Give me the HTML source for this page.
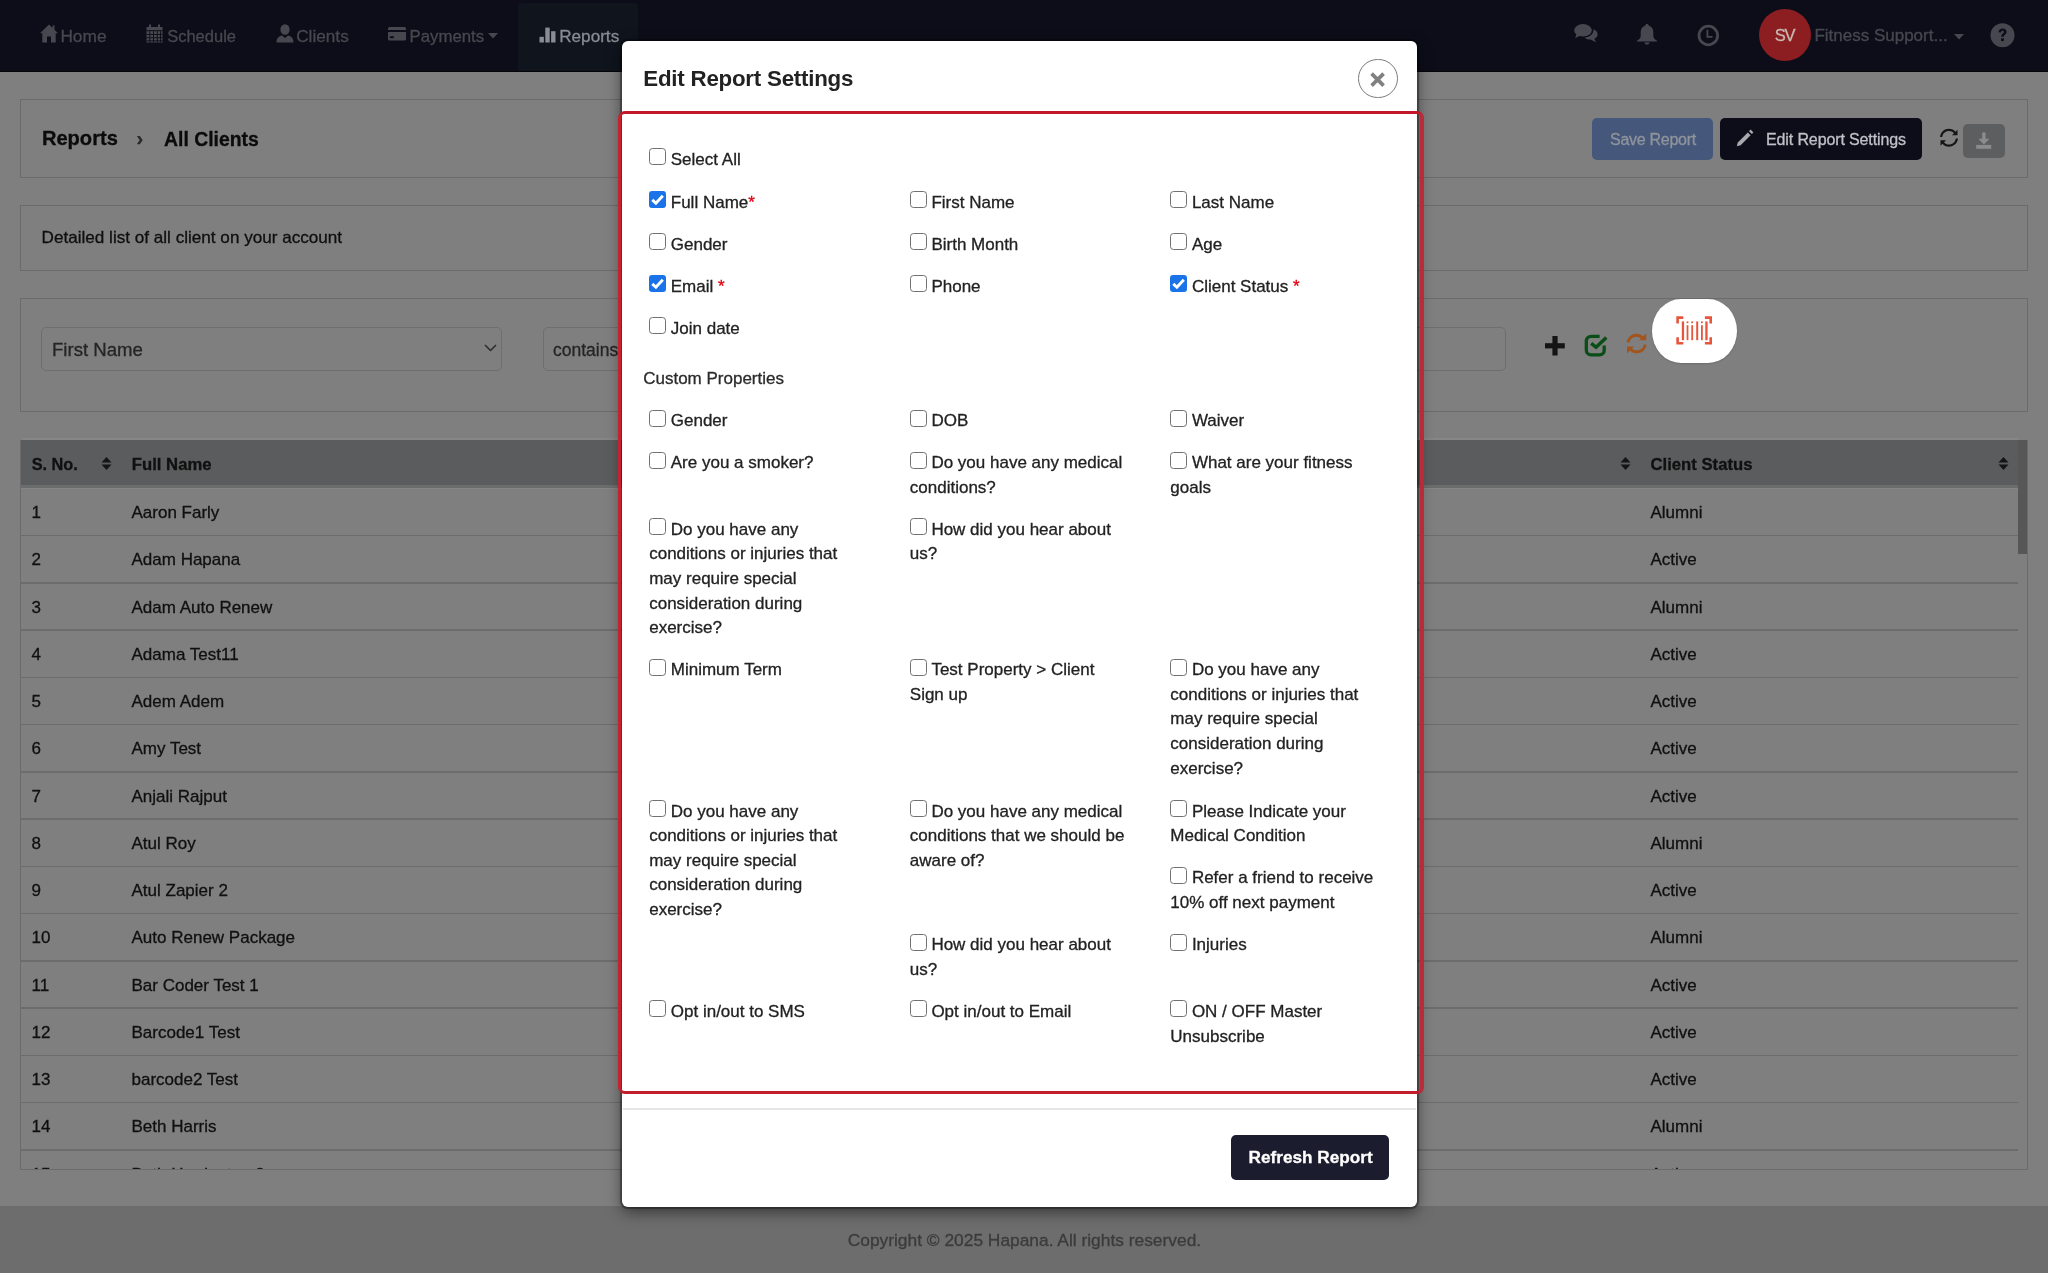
<!DOCTYPE html>
<html>
<head>
<meta charset="utf-8">
<title>Edit Report Settings</title>
<style>
*{box-sizing:border-box;margin:0;padding:0}
html,body{width:2048px;height:1273px;overflow:hidden}
body{position:relative;background:#7f7f7f;font-family:"Liberation Sans",sans-serif;color:#111;font-size:17px}
.abs{position:absolute}
.t{white-space:nowrap;-webkit-text-stroke:0.3px currentColor}
svg{display:block}
</style>
</head>
<body>
<div id="root" style="position:absolute;left:0;top:0;width:2048px;height:1273px;will-change:transform">
<div class="abs" style="left:0;top:0;width:2048px;height:71px;background:#0c0d18"></div>
<div class="abs" style="left:518px;top:3px;width:120px;height:68px;background:#0f141d;border-radius:4px 4px 0 0"></div>
<div class="abs" style="left:0;top:71px;width:2048px;height:1px;background:#050509"></div>
<svg class="abs" style="left:40px;top:24px" width="18" height="19" viewBox="0 0 18 19"><path d="M9 0.5 L0 9.2 L2.3 9.2 L2.3 18.5 L7 18.5 L7 12.5 L11 12.5 L11 18.5 L15.7 18.5 L15.7 9.2 L18 9.2 L14.5 5.8 L14.5 1.5 L12.5 1.5 L12.5 3.9 Z" fill="#47484f"/></svg>
<div class="abs t " style="left:60.4px;top:26.66px;font-size:17.3px;line-height:19.89px;font-weight:400;color:#47484f;">Home</div>
<svg class="abs" style="left:146px;top:24px" width="17" height="19" viewBox="0 0 17 19"><rect x="0.5" y="3" width="16" height="15.5" fill="#47484f"/><rect x="3" y="0.5" width="2" height="4" fill="#47484f"/><rect x="12" y="0.5" width="2" height="4" fill="#47484f"/>
<g fill="#0c0d18"><rect x="0.5" y="6.2" width="16" height="1"/>
<rect x="3.4" y="7.2" width="0.9" height="11"/><rect x="7.1" y="7.2" width="0.9" height="11"/><rect x="10.8" y="7.2" width="0.9" height="11"/><rect x="14.1" y="7.2" width="0.9" height="11"/>
<rect x="0.5" y="10" width="16" height="0.9"/><rect x="0.5" y="13.3" width="16" height="0.9"/><rect x="0.5" y="16.4" width="16" height="0.9"/></g></svg>
<div class="abs t " style="left:167.2px;top:27.40px;font-size:16.5px;line-height:18.97px;font-weight:400;color:#47484f;">Schedule</div>
<svg class="abs" style="left:276px;top:24px" width="18" height="19" viewBox="0 0 18 19"><ellipse cx="9" cy="5.5" rx="4.6" ry="5.3" fill="#47484f"/><path d="M0.5 18.5 C0.5 14 3 12.2 6 11.6 L9 14 L12 11.6 C15 12.2 17.5 14 17.5 18.5 Z" fill="#47484f"/></svg>
<div class="abs t " style="left:296.2px;top:26.75px;font-size:17.2px;line-height:19.78px;font-weight:400;color:#47484f;">Clients</div>
<svg class="abs" style="left:388px;top:27px" width="18" height="14" viewBox="0 0 18 14"><rect x="0" y="0" width="18" height="13.5" rx="1.5" fill="#47484f"/><rect x="0" y="3" width="18" height="2" fill="#0c0d18"/><rect x="1.8" y="9.2" width="4" height="2" fill="#0c0d18"/></svg>
<div class="abs t " style="left:409.5px;top:27.12px;font-size:16.8px;line-height:19.32px;font-weight:400;color:#47484f;">Payments</div>
<svg class="abs" style="left:488px;top:33px" width="10" height="6" viewBox="0 0 10 6"><path d="M0 0 L10 0 L5 5.5 Z" fill="#47484f"/></svg>
<svg class="abs" style="left:539px;top:27px" width="17" height="17" viewBox="0 0 17 17"><rect x="0.5" y="9.8" width="4.4" height="5.7" fill="#898c92"/><rect x="6.3" y="0.6" width="4.4" height="14.9" fill="#898c92"/><rect x="12.1" y="4.2" width="4.4" height="11.3" fill="#898c92"/></svg>
<div class="abs t " style="left:559.2px;top:26.80px;font-size:17.15px;line-height:19.72px;font-weight:400;color:#898c92;">Reports</div>
<svg class="abs" style="left:1574px;top:24px" width="24" height="19" viewBox="0 0 24 19"><ellipse cx="9" cy="6.3" rx="8.8" ry="6.2" fill="#47484f"/><path d="M2.5 10 L1.2 14 L7 11.5 Z" fill="#47484f"/><path d="M19.5 5.2 C22.3 6.3 23.6 8.3 23.6 10.2 C23.6 12.2 22.2 13.8 20.2 14.7 L22.2 18.2 L16.5 15.5 C14 15.6 12 15 10.6 13.5 C16 13.3 19.6 10 19.5 5.2 Z" fill="#47484f"/></svg>
<svg class="abs" style="left:1636px;top:23px" width="22" height="22" viewBox="0 0 22 22"><path d="M11 1 C12 1 12.6 1.6 12.6 2.4 C15.6 3.2 17.3 5.8 17.3 9 L17.3 13 C17.3 15 19 16.6 21 17.8 L21 18.6 L1 18.6 L1 17.8 C3 16.6 4.7 15 4.7 13 L4.7 9 C4.7 5.8 6.4 3.2 9.4 2.4 C9.4 1.6 10 1 11 1 Z" fill="#47484f"/><path d="M8.5 19.4 L13.5 19.4 C13.3 20.7 12.3 21.5 11 21.5 C9.7 21.5 8.7 20.7 8.5 19.4 Z" fill="#47484f"/></svg>
<svg class="abs" style="left:1697px;top:24px" width="23" height="23" viewBox="0 0 23 23"><circle cx="11.3" cy="11.5" r="9.3" fill="none" stroke="#47484f" stroke-width="2.8"/><path d="M10.4 5.8 L10.4 12.8 L15.5 12.8" fill="none" stroke="#47484f" stroke-width="1.8"/></svg>
<div class="abs" style="left:1759px;top:9px;width:52px;height:52px;border-radius:50%;background:#8c1e22"></div>
<div class="abs t " style="left:1774.7px;top:26.20px;font-size:16.5px;line-height:18.97px;font-weight:400;color:#c9b9b3;letter-spacing:-1.2px">SV</div>
<div class="abs t " style="left:1814.4px;top:26.33px;font-size:17px;line-height:19.55px;font-weight:400;color:#47484f;">Fitness Support...</div>
<svg class="abs" style="left:1954px;top:34px" width="10" height="6" viewBox="0 0 10 6"><path d="M0 0 L10 0 L5 5.5 Z" fill="#47484f"/></svg>
<svg class="abs" style="left:1990px;top:23px" width="25" height="25" viewBox="0 0 25 25"><circle cx="12.5" cy="12.3" r="12" fill="#47484f"/><path d="M8.6 9.2 C8.8 6.8 10.4 5.6 12.6 5.6 C15 5.6 16.6 7 16.6 9 C16.6 11.6 13.8 11.8 13.8 13.8 L11.2 13.8 C11.2 10.6 13.9 10.6 13.9 9.1 C13.9 8.3 13.3 7.8 12.5 7.8 C11.6 7.8 11.1 8.4 11 9.4 Z" fill="#0c0d18"/><rect x="11.1" y="15.3" width="2.8" height="2.8" fill="#0c0d18"/></svg>
<div class="abs" style="left:20px;top:99px;width:2008px;height:79px;border:1.5px solid #6b6b6b"></div>
<div class="abs t " style="left:41.9px;top:127.48px;font-size:20.1px;line-height:23.11px;font-weight:700;color:#0b0b0c;">Reports</div>
<div class="abs t " style="left:136.5px;top:126.57px;font-size:20px;line-height:23.0px;font-weight:700;color:#2a2a2c;">&#8250;</div>
<div class="abs t " style="left:164px;top:128.12px;font-size:19.4px;line-height:22.31px;font-weight:700;color:#0b0b0c;letter-spacing:0px">All Clients</div>
<div class="abs" style="left:1592px;top:118px;width:121px;height:42px;border-radius:5px;background:#45577a"></div>
<div class="abs t " style="left:1610px;top:130.66px;font-size:16px;line-height:18.4px;font-weight:400;color:#8f949c;letter-spacing:-0.28px">Save Report</div>
<div class="abs" style="left:1720px;top:118px;width:202px;height:42px;border-radius:5px;background:#0c0d18"></div>
<svg class="abs" style="left:1736px;top:129px" width="18" height="18" viewBox="0 0 18 18"><path d="M0.8 17.2 L1.8 13.4 L11.8 3.4 L14.6 6.2 L4.6 16.2 Z" fill="#a9aaaf"/><path d="M13 2.2 L14.6 0.6 L17.4 3.4 L15.8 5 Z" fill="#a9aaaf"/></svg>
<div class="abs t " style="left:1766px;top:130.66px;font-size:16px;line-height:18.4px;font-weight:400;color:#c0c1c6;letter-spacing:-0.12px">Edit Report Settings</div>
<svg class="abs" style="left:1940px;top:128px" width="18" height="19" viewBox="0 0 18 19"><path d="M2.2 8 C2.6 4.6 5.4 2 9 2 C11 2 12.8 2.9 14 4.3 L12 6.2 L17.5 6.2 L17.5 0.8 L15.6 2.7 C14 0.9 11.6 -0.2 9 -0.2 C4.3 -0.2 0.5 3.3 0 8 Z" fill="#151515" transform="translate(0,1)"/><path d="M15.8 10.5 C15.4 13.9 12.6 16.5 9 16.5 C7 16.5 5.2 15.6 4 14.2 L6 12.3 L0.5 12.3 L0.5 17.7 L2.4 15.8 C4 17.6 6.4 18.7 9 18.7 C13.7 18.7 17.5 15.2 18 10.5 Z" fill="#151515"/></svg>
<div class="abs" style="left:1963px;top:124px;width:42px;height:34px;border-radius:5px;background:#5d5e60"></div>
<svg class="abs" style="left:1975px;top:131px" width="18" height="19" viewBox="0 0 18 19"><rect x="7.2" y="1.4" width="3.3" height="7.2" fill="#8c8c8c"/><path d="M3.3 7.8 L14.5 7.8 L8.9 13.4 Z" fill="#8c8c8c"/><rect x="1.2" y="13.9" width="15" height="3.9" fill="#8c8c8c"/></svg>
<div class="abs" style="left:20px;top:205px;width:2008px;height:66px;border:1.5px solid #6b6b6b"></div>
<div class="abs t " style="left:41.6px;top:228.41px;font-size:17.13px;line-height:19.7px;font-weight:400;color:#0f0f10;">Detailed list of all client on your account</div>
<div class="abs" style="left:20px;top:298px;width:2008px;height:114px;border:1.5px solid #6b6b6b"></div>
<div class="abs" style="left:41px;top:326.5px;width:461px;height:44.5px;border:1.5px solid #6e6e6e;border-radius:5px"></div>
<div class="abs t " style="left:52px;top:338.86px;font-size:18.6px;line-height:21.39px;font-weight:400;color:#252526;">First Name</div>
<svg class="abs" style="left:484px;top:344px" width="13" height="8" viewBox="0 0 13 8"><path d="M1 1 L6.5 6.5 L12 1" fill="none" stroke="#2a2a2a" stroke-width="1.5"/></svg>
<div class="abs" style="left:543px;top:326.5px;width:963px;height:44.5px;border:1.5px solid #6e6e6e;border-radius:5px"></div>
<div class="abs t " style="left:553px;top:339.88px;font-size:17.5px;line-height:20.12px;font-weight:400;color:#252526;">contains</div>
<svg class="abs" style="left:1545px;top:336px" width="20" height="20" viewBox="0 0 20 20"><rect x="7.4" y="0" width="5.2" height="19.5" fill="#141414"/><rect x="0" y="7.2" width="19.8" height="5.2" fill="#141414"/></svg>
<svg class="abs" style="left:1584px;top:334px" width="24" height="23" viewBox="0 0 24 23"><path d="M15.6 2.3 L7.2 2.3 C4.4 2.3 2.3 4.4 2.3 7.2 L2.3 15.9 C2.3 18.7 4.4 20.8 7.2 20.8 L15.5 20.8 C18.3 20.8 20.2 18.7 20.2 15.9 L20.2 11.6" fill="none" stroke="#0a4d17" stroke-width="3.3"/><path d="M7.2 9.4 L12.1 13.3 L22.3 3.6" fill="none" stroke="#0a4d17" stroke-width="3.5"/></svg>
<svg class="abs" style="left:1625px;top:332px" width="23" height="23" viewBox="0 0 23 23"><g fill="none" stroke="#a3541d" stroke-width="2.9"><path d="M3 10.5 C3.6 6.3 7.1 3.2 11.4 3.2 C14 3.2 16.3 4.4 17.8 6.3"/><path d="M20.2 12.6 C19.6 16.8 16.1 19.9 11.8 19.9 C9.2 19.9 6.9 18.7 5.4 16.8"/></g><path d="M14.2 8.3 L21.2 8.3 L21.2 1.3 Z" fill="#a3541d"/><path d="M9 14.6 L2 14.6 L2 21.6 Z" fill="#a3541d"/></svg>
<div class="abs" style="left:21.5px;top:438.3px;width:1997px;height:1.3px;background:#868686"></div>
<div class="abs" style="left:20px;top:439.6px;width:2008px;height:730.4px;border-left:1.5px solid #6b6b6b;border-right:1.5px solid #6b6b6b;border-bottom:1.5px solid #6b6b6b;overflow:hidden">
<div class="abs" style="left:0;top:0;width:2006px;height:45px;background:#5b5c5d"></div>
<div class="abs" style="left:0;top:45px;width:2006px;height:3.3px;background:#6b6c6c"></div>
<div class="abs" style="left:0;top:48.3px;width:2006px;height:1.4px;background:#858686"></div>
<div class="abs t " style="left:10.700000000000003px;top:15.38px;font-size:16.3px;line-height:18.75px;font-weight:700;color:#101010;">S. No.</div>
<svg class="abs" style="left:80.0px;top:17.69999999999999px" width="11" height="13" viewBox="0 0 11 13"><path d="M5.5 0 L10.5 5.6 L0.5 5.6 Z" fill="#151515"/><path d="M5.5 13 L10.5 7.4 L0.5 7.4 Z" fill="#151515"/></svg>
<div class="abs t " style="left:110.80000000000001px;top:15.01px;font-size:16.7px;line-height:19.2px;font-weight:700;color:#101010;">Full Name</div>
<svg class="abs" style="left:1599.0px;top:17.69999999999999px" width="11" height="13" viewBox="0 0 11 13"><path d="M5.5 0 L10.5 5.6 L0.5 5.6 Z" fill="#151515"/><path d="M5.5 13 L10.5 7.4 L0.5 7.4 Z" fill="#151515"/></svg>
<div class="abs t " style="left:1629.5px;top:15.01px;font-size:16.7px;line-height:19.2px;font-weight:700;color:#101010;">Client Status</div>
<svg class="abs" style="left:1977.0px;top:17.69999999999999px" width="11" height="13" viewBox="0 0 11 13"><path d="M5.5 0 L10.5 5.6 L0.5 5.6 Z" fill="#151515"/><path d="M5.5 13 L10.5 7.4 L0.5 7.4 Z" fill="#151515"/></svg>
<div class="abs" style="left:0;top:95.35px;width:1997px;height:1.5px;background:#6c6c6c"></div>
<div class="abs t " style="left:10.5px;top:63.63px;font-size:17px;line-height:19.55px;font-weight:400;color:#101010;">1</div>
<div class="abs t " style="left:110.5px;top:63.63px;font-size:17px;line-height:19.55px;font-weight:400;color:#101010;">Aaron Farly</div>
<div class="abs t " style="left:1629.5px;top:63.63px;font-size:17px;line-height:19.55px;font-weight:400;color:#101010;">Alumni</div>
<div class="abs" style="left:0;top:142.60px;width:1997px;height:1.5px;background:#6c6c6c"></div>
<div class="abs t " style="left:10.5px;top:110.88px;font-size:17px;line-height:19.55px;font-weight:400;color:#101010;">2</div>
<div class="abs t " style="left:110.5px;top:110.88px;font-size:17px;line-height:19.55px;font-weight:400;color:#101010;">Adam Hapana</div>
<div class="abs t " style="left:1629.5px;top:110.88px;font-size:17px;line-height:19.55px;font-weight:400;color:#101010;">Active</div>
<div class="abs" style="left:0;top:189.85px;width:1997px;height:1.5px;background:#6c6c6c"></div>
<div class="abs t " style="left:10.5px;top:158.13px;font-size:17px;line-height:19.55px;font-weight:400;color:#101010;">3</div>
<div class="abs t " style="left:110.5px;top:158.13px;font-size:17px;line-height:19.55px;font-weight:400;color:#101010;">Adam Auto Renew</div>
<div class="abs t " style="left:1629.5px;top:158.13px;font-size:17px;line-height:19.55px;font-weight:400;color:#101010;">Alumni</div>
<div class="abs" style="left:0;top:237.10px;width:1997px;height:1.5px;background:#6c6c6c"></div>
<div class="abs t " style="left:10.5px;top:205.38px;font-size:17px;line-height:19.55px;font-weight:400;color:#101010;">4</div>
<div class="abs t " style="left:110.5px;top:205.38px;font-size:17px;line-height:19.55px;font-weight:400;color:#101010;">Adama Test11</div>
<div class="abs t " style="left:1629.5px;top:205.38px;font-size:17px;line-height:19.55px;font-weight:400;color:#101010;">Active</div>
<div class="abs" style="left:0;top:284.35px;width:1997px;height:1.5px;background:#6c6c6c"></div>
<div class="abs t " style="left:10.5px;top:252.63px;font-size:17px;line-height:19.55px;font-weight:400;color:#101010;">5</div>
<div class="abs t " style="left:110.5px;top:252.63px;font-size:17px;line-height:19.55px;font-weight:400;color:#101010;">Adem Adem</div>
<div class="abs t " style="left:1629.5px;top:252.63px;font-size:17px;line-height:19.55px;font-weight:400;color:#101010;">Active</div>
<div class="abs" style="left:0;top:331.60px;width:1997px;height:1.5px;background:#6c6c6c"></div>
<div class="abs t " style="left:10.5px;top:299.88px;font-size:17px;line-height:19.55px;font-weight:400;color:#101010;">6</div>
<div class="abs t " style="left:110.5px;top:299.88px;font-size:17px;line-height:19.55px;font-weight:400;color:#101010;">Amy Test</div>
<div class="abs t " style="left:1629.5px;top:299.88px;font-size:17px;line-height:19.55px;font-weight:400;color:#101010;">Active</div>
<div class="abs" style="left:0;top:378.85px;width:1997px;height:1.5px;background:#6c6c6c"></div>
<div class="abs t " style="left:10.5px;top:347.13px;font-size:17px;line-height:19.55px;font-weight:400;color:#101010;">7</div>
<div class="abs t " style="left:110.5px;top:347.13px;font-size:17px;line-height:19.55px;font-weight:400;color:#101010;">Anjali Rajput</div>
<div class="abs t " style="left:1629.5px;top:347.13px;font-size:17px;line-height:19.55px;font-weight:400;color:#101010;">Active</div>
<div class="abs" style="left:0;top:426.10px;width:1997px;height:1.5px;background:#6c6c6c"></div>
<div class="abs t " style="left:10.5px;top:394.38px;font-size:17px;line-height:19.55px;font-weight:400;color:#101010;">8</div>
<div class="abs t " style="left:110.5px;top:394.38px;font-size:17px;line-height:19.55px;font-weight:400;color:#101010;">Atul Roy</div>
<div class="abs t " style="left:1629.5px;top:394.38px;font-size:17px;line-height:19.55px;font-weight:400;color:#101010;">Alumni</div>
<div class="abs" style="left:0;top:473.35px;width:1997px;height:1.5px;background:#6c6c6c"></div>
<div class="abs t " style="left:10.5px;top:441.63px;font-size:17px;line-height:19.55px;font-weight:400;color:#101010;">9</div>
<div class="abs t " style="left:110.5px;top:441.63px;font-size:17px;line-height:19.55px;font-weight:400;color:#101010;">Atul Zapier 2</div>
<div class="abs t " style="left:1629.5px;top:441.63px;font-size:17px;line-height:19.55px;font-weight:400;color:#101010;">Active</div>
<div class="abs" style="left:0;top:520.60px;width:1997px;height:1.5px;background:#6c6c6c"></div>
<div class="abs t " style="left:10.5px;top:488.88px;font-size:17px;line-height:19.55px;font-weight:400;color:#101010;">10</div>
<div class="abs t " style="left:110.5px;top:488.88px;font-size:17px;line-height:19.55px;font-weight:400;color:#101010;">Auto Renew Package</div>
<div class="abs t " style="left:1629.5px;top:488.88px;font-size:17px;line-height:19.55px;font-weight:400;color:#101010;">Alumni</div>
<div class="abs" style="left:0;top:567.85px;width:1997px;height:1.5px;background:#6c6c6c"></div>
<div class="abs t " style="left:10.5px;top:536.13px;font-size:17px;line-height:19.55px;font-weight:400;color:#101010;">11</div>
<div class="abs t " style="left:110.5px;top:536.13px;font-size:17px;line-height:19.55px;font-weight:400;color:#101010;">Bar Coder Test 1</div>
<div class="abs t " style="left:1629.5px;top:536.13px;font-size:17px;line-height:19.55px;font-weight:400;color:#101010;">Active</div>
<div class="abs" style="left:0;top:615.10px;width:1997px;height:1.5px;background:#6c6c6c"></div>
<div class="abs t " style="left:10.5px;top:583.38px;font-size:17px;line-height:19.55px;font-weight:400;color:#101010;">12</div>
<div class="abs t " style="left:110.5px;top:583.38px;font-size:17px;line-height:19.55px;font-weight:400;color:#101010;">Barcode1 Test</div>
<div class="abs t " style="left:1629.5px;top:583.38px;font-size:17px;line-height:19.55px;font-weight:400;color:#101010;">Active</div>
<div class="abs" style="left:0;top:662.35px;width:1997px;height:1.5px;background:#6c6c6c"></div>
<div class="abs t " style="left:10.5px;top:630.63px;font-size:17px;line-height:19.55px;font-weight:400;color:#101010;">13</div>
<div class="abs t " style="left:110.5px;top:630.63px;font-size:17px;line-height:19.55px;font-weight:400;color:#101010;">barcode2 Test</div>
<div class="abs t " style="left:1629.5px;top:630.63px;font-size:17px;line-height:19.55px;font-weight:400;color:#101010;">Active</div>
<div class="abs" style="left:0;top:709.60px;width:1997px;height:1.5px;background:#6c6c6c"></div>
<div class="abs t " style="left:10.5px;top:677.88px;font-size:17px;line-height:19.55px;font-weight:400;color:#101010;">14</div>
<div class="abs t " style="left:110.5px;top:677.88px;font-size:17px;line-height:19.55px;font-weight:400;color:#101010;">Beth Harris</div>
<div class="abs t " style="left:1629.5px;top:677.88px;font-size:17px;line-height:19.55px;font-weight:400;color:#101010;">Alumni</div>
<div class="abs" style="left:0;top:756.85px;width:1997px;height:1.5px;background:#6c6c6c"></div>
<div class="abs t " style="left:10.5px;top:725.13px;font-size:17px;line-height:19.55px;font-weight:400;color:#101010;">15</div>
<div class="abs t " style="left:110.5px;top:725.13px;font-size:17px;line-height:19.55px;font-weight:400;color:#101010;">Beth Harrington 2</div>
<div class="abs t " style="left:1629.5px;top:725.13px;font-size:17px;line-height:19.55px;font-weight:400;color:#101010;">Active</div>
<div class="abs" style="left:1997px;top:0;width:9px;height:114px;background:#575757"></div>
</div>
<div class="abs" style="left:0;top:1206px;width:2048px;height:67px;background:#6d6d6d"></div>
<div class="abs t " style="left:847.7px;top:1229.68px;font-size:17.38px;line-height:19.99px;font-weight:400;color:#3b3b3b;">Copyright &copy; 2025 Hapana. All rights reserved.</div>
<div class="abs" style="left:1652px;top:298.8px;width:85px;height:64px;border-radius:29px/32px;background:#fff;box-shadow:0 1px 2px rgba(0,0,0,.15)"></div>
<svg class="abs" style="left:1676px;top:316px" width="37" height="30" viewBox="0 0 37 30"><g fill="none" stroke="#e8553d" stroke-width="2.6"><path d="M7.3 1.6 L1.6 1.6 L1.6 7.6"/><path d="M28.9 1.6 L34.7 1.6 L34.7 7.6"/><path d="M7.3 27.2 L1.6 27.2 L1.6 21.2"/><path d="M28.9 27.2 L34.7 27.2 L34.7 21.2"/></g>
<g fill="#e8553d"><rect x="5.8" y="5.4" width="2.3" height="18.8"/><rect x="10.6" y="5.4" width="1.8" height="1.8"/><rect x="10.6" y="9.2" width="1.8" height="15"/><rect x="15.3" y="5.4" width="1.8" height="1.8"/><rect x="15.3" y="9.2" width="1.8" height="15"/><rect x="20.2" y="5.4" width="2" height="18.8"/><rect x="25" y="5.4" width="1.8" height="1.8"/><rect x="25" y="9.2" width="1.8" height="15"/><rect x="29.3" y="5.4" width="2.3" height="18.8"/></g></svg>
<div class="abs" style="left:622.3px;top:41px;width:794.7px;height:1165.6px;background:#fff;border-radius:6px;box-shadow:0 0 1px 1.5px rgba(0,0,0,.35),0 5px 15px rgba(0,0,0,.5)"></div>
<div class="abs t " style="left:643.3px;top:66.05px;font-size:22.3px;line-height:25.64px;font-weight:700;color:#222222;-webkit-text-stroke:0;letter-spacing:-0.22px">Edit Report Settings</div>
<div class="abs" style="left:1358px;top:58.5px;width:39.5px;height:39.5px;border-radius:50%;border:1.7px solid #7b7b7b"></div>
<svg class="abs" style="left:1369px;top:71px" width="17" height="17" viewBox="0 0 17 17"><path d="M2.6 2.6 L14.6 14.6 M14.6 2.6 L2.6 14.6" stroke="#808080" stroke-width="3.7" stroke-linecap="butt"/></svg>
<div class="abs" style="left:623px;top:1108px;width:793px;height:1.5px;background:#e6e6e6"></div>
<div class="abs" style="left:1231px;top:1135px;width:158px;height:45px;border-radius:5px;background:#1b1c2e"></div>
<div class="abs t " style="left:1248.6px;top:1148.25px;font-size:17.2px;line-height:19.78px;font-weight:700;color:#ffffff;">Refresh Report</div>
<div class="abs" style="left:649.2px;top:148.2px;width:17px;height:17px;border:1.5px solid #717171;border-radius:3.5px"></div>
<div class="abs t" style="left:649.2px;top:147.91px;font-size:17px;line-height:24.6px;color:#222;text-indent:21.6px">Select All</div>
<div class="abs" style="left:649.2px;top:191px;width:17px;height:17px"><svg width="17" height="17" viewBox="0 0 17 17" style="position:absolute;left:0;top:0"><rect x="0" y="0" width="17" height="17" rx="3" fill="#1a73e8"/><path d="M3.3 8.9 L6.9 12.2 L13.8 4.7" fill="none" stroke="#fff" stroke-width="2.9"/></svg></div>
<div class="abs t" style="left:649.2px;top:190.71px;font-size:17px;line-height:24.6px;color:#222;text-indent:21.6px">Full Name<span style="color:#e3000f">*</span></div>
<div class="abs" style="left:909.8px;top:191px;width:17px;height:17px;border:1.5px solid #717171;border-radius:3.5px"></div>
<div class="abs t" style="left:909.8px;top:190.71px;font-size:17px;line-height:24.6px;color:#222;text-indent:21.6px">First Name</div>
<div class="abs" style="left:1170.3px;top:191px;width:17px;height:17px;border:1.5px solid #717171;border-radius:3.5px"></div>
<div class="abs t" style="left:1170.3px;top:190.71px;font-size:17px;line-height:24.6px;color:#222;text-indent:21.6px">Last Name</div>
<div class="abs" style="left:649.2px;top:233.2px;width:17px;height:17px;border:1.5px solid #717171;border-radius:3.5px"></div>
<div class="abs t" style="left:649.2px;top:232.91px;font-size:17px;line-height:24.6px;color:#222;text-indent:21.6px">Gender</div>
<div class="abs" style="left:909.8px;top:233.2px;width:17px;height:17px;border:1.5px solid #717171;border-radius:3.5px"></div>
<div class="abs t" style="left:909.8px;top:232.91px;font-size:17px;line-height:24.6px;color:#222;text-indent:21.6px">Birth Month</div>
<div class="abs" style="left:1170.3px;top:233.2px;width:17px;height:17px;border:1.5px solid #717171;border-radius:3.5px"></div>
<div class="abs t" style="left:1170.3px;top:232.91px;font-size:17px;line-height:24.6px;color:#222;text-indent:21.6px">Age</div>
<div class="abs" style="left:649.2px;top:275.2px;width:17px;height:17px"><svg width="17" height="17" viewBox="0 0 17 17" style="position:absolute;left:0;top:0"><rect x="0" y="0" width="17" height="17" rx="3" fill="#1a73e8"/><path d="M3.3 8.9 L6.9 12.2 L13.8 4.7" fill="none" stroke="#fff" stroke-width="2.9"/></svg></div>
<div class="abs t" style="left:649.2px;top:274.91px;font-size:17px;line-height:24.6px;color:#222;text-indent:21.6px">Email <span style="color:#e3000f">*</span></div>
<div class="abs" style="left:909.8px;top:275.2px;width:17px;height:17px;border:1.5px solid #717171;border-radius:3.5px"></div>
<div class="abs t" style="left:909.8px;top:274.91px;font-size:17px;line-height:24.6px;color:#222;text-indent:21.6px">Phone</div>
<div class="abs" style="left:1170.3px;top:275.2px;width:17px;height:17px"><svg width="17" height="17" viewBox="0 0 17 17" style="position:absolute;left:0;top:0"><rect x="0" y="0" width="17" height="17" rx="3" fill="#1a73e8"/><path d="M3.3 8.9 L6.9 12.2 L13.8 4.7" fill="none" stroke="#fff" stroke-width="2.9"/></svg></div>
<div class="abs t" style="left:1170.3px;top:274.91px;font-size:17px;line-height:24.6px;color:#222;text-indent:21.6px">Client Status <span style="color:#e3000f">*</span></div>
<div class="abs" style="left:649.2px;top:317px;width:17px;height:17px;border:1.5px solid #717171;border-radius:3.5px"></div>
<div class="abs t" style="left:649.2px;top:316.71px;font-size:17px;line-height:24.6px;color:#222;text-indent:21.6px">Join date</div>
<div class="abs t " style="left:643.2px;top:369.13px;font-size:17px;line-height:19.55px;font-weight:400;color:#2b2b2b;">Custom Properties</div>
<div class="abs" style="left:649.2px;top:409.6px;width:17px;height:17px;border:1.5px solid #717171;border-radius:3.5px"></div>
<div class="abs t" style="left:649.2px;top:409.31px;font-size:17px;line-height:24.6px;color:#222;text-indent:21.6px">Gender</div>
<div class="abs" style="left:909.8px;top:409.6px;width:17px;height:17px;border:1.5px solid #717171;border-radius:3.5px"></div>
<div class="abs t" style="left:909.8px;top:409.31px;font-size:17px;line-height:24.6px;color:#222;text-indent:21.6px">DOB</div>
<div class="abs" style="left:1170.3px;top:409.6px;width:17px;height:17px;border:1.5px solid #717171;border-radius:3.5px"></div>
<div class="abs t" style="left:1170.3px;top:409.31px;font-size:17px;line-height:24.6px;color:#222;text-indent:21.6px">Waiver</div>
<div class="abs" style="left:649.2px;top:451.6px;width:17px;height:17px;border:1.5px solid #717171;border-radius:3.5px"></div>
<div class="abs t" style="left:649.2px;top:451.31px;font-size:17px;line-height:24.6px;color:#222;text-indent:21.6px">Are you a smoker?</div>
<div class="abs" style="left:909.8px;top:451.6px;width:17px;height:17px;border:1.5px solid #717171;border-radius:3.5px"></div>
<div class="abs t" style="left:909.8px;top:451.31px;font-size:17px;line-height:24.6px;color:#222;text-indent:21.6px">Do you have any medical<br>conditions?</div>
<div class="abs" style="left:1170.3px;top:451.6px;width:17px;height:17px;border:1.5px solid #717171;border-radius:3.5px"></div>
<div class="abs t" style="left:1170.3px;top:451.31px;font-size:17px;line-height:24.6px;color:#222;text-indent:21.6px">What are your fitness<br>goals</div>
<div class="abs" style="left:649.2px;top:518.1px;width:17px;height:17px;border:1.5px solid #717171;border-radius:3.5px"></div>
<div class="abs t" style="left:649.2px;top:517.81px;font-size:17px;line-height:24.6px;color:#222;text-indent:21.6px">Do you have any<br>conditions or injuries that<br>may require special<br>consideration during<br>exercise?</div>
<div class="abs" style="left:909.8px;top:518.1px;width:17px;height:17px;border:1.5px solid #717171;border-radius:3.5px"></div>
<div class="abs t" style="left:909.8px;top:517.81px;font-size:17px;line-height:24.6px;color:#222;text-indent:21.6px">How did you hear about<br>us?</div>
<div class="abs" style="left:649.2px;top:658.6px;width:17px;height:17px;border:1.5px solid #717171;border-radius:3.5px"></div>
<div class="abs t" style="left:649.2px;top:658.31px;font-size:17px;line-height:24.6px;color:#222;text-indent:21.6px">Minimum Term</div>
<div class="abs" style="left:909.8px;top:658.6px;width:17px;height:17px;border:1.5px solid #717171;border-radius:3.5px"></div>
<div class="abs t" style="left:909.8px;top:658.31px;font-size:17px;line-height:24.6px;color:#222;text-indent:21.6px">Test Property &gt; Client<br>Sign up</div>
<div class="abs" style="left:1170.3px;top:658.6px;width:17px;height:17px;border:1.5px solid #717171;border-radius:3.5px"></div>
<div class="abs t" style="left:1170.3px;top:658.31px;font-size:17px;line-height:24.6px;color:#222;text-indent:21.6px">Do you have any<br>conditions or injuries that<br>may require special<br>consideration during<br>exercise?</div>
<div class="abs" style="left:649.2px;top:800px;width:17px;height:17px;border:1.5px solid #717171;border-radius:3.5px"></div>
<div class="abs t" style="left:649.2px;top:799.71px;font-size:17px;line-height:24.6px;color:#222;text-indent:21.6px">Do you have any<br>conditions or injuries that<br>may require special<br>consideration during<br>exercise?</div>
<div class="abs" style="left:909.8px;top:800px;width:17px;height:17px;border:1.5px solid #717171;border-radius:3.5px"></div>
<div class="abs t" style="left:909.8px;top:799.71px;font-size:17px;line-height:24.6px;color:#222;text-indent:21.6px">Do you have any medical<br>conditions that we should be<br>aware of?</div>
<div class="abs" style="left:1170.3px;top:800px;width:17px;height:17px;border:1.5px solid #717171;border-radius:3.5px"></div>
<div class="abs t" style="left:1170.3px;top:799.71px;font-size:17px;line-height:24.6px;color:#222;text-indent:21.6px">Please Indicate your<br>Medical Condition</div>
<div class="abs" style="left:1170.3px;top:866.7px;width:17px;height:17px;border:1.5px solid #717171;border-radius:3.5px"></div>
<div class="abs t" style="left:1170.3px;top:866.41px;font-size:17px;line-height:24.6px;color:#222;text-indent:21.6px">Refer a friend to receive<br>10% off next payment</div>
<div class="abs" style="left:909.8px;top:933.5px;width:17px;height:17px;border:1.5px solid #717171;border-radius:3.5px"></div>
<div class="abs t" style="left:909.8px;top:933.21px;font-size:17px;line-height:24.6px;color:#222;text-indent:21.6px">How did you hear about<br>us?</div>
<div class="abs" style="left:1170.3px;top:933.5px;width:17px;height:17px;border:1.5px solid #717171;border-radius:3.5px"></div>
<div class="abs t" style="left:1170.3px;top:933.21px;font-size:17px;line-height:24.6px;color:#222;text-indent:21.6px">Injuries</div>
<div class="abs" style="left:649.2px;top:1000.2px;width:17px;height:17px;border:1.5px solid #717171;border-radius:3.5px"></div>
<div class="abs t" style="left:649.2px;top:999.91px;font-size:17px;line-height:24.6px;color:#222;text-indent:21.6px">Opt in/out to SMS</div>
<div class="abs" style="left:909.8px;top:1000.2px;width:17px;height:17px;border:1.5px solid #717171;border-radius:3.5px"></div>
<div class="abs t" style="left:909.8px;top:999.91px;font-size:17px;line-height:24.6px;color:#222;text-indent:21.6px">Opt in/out to Email</div>
<div class="abs" style="left:1170.3px;top:1000.2px;width:17px;height:17px;border:1.5px solid #717171;border-radius:3.5px"></div>
<div class="abs t" style="left:1170.3px;top:999.91px;font-size:17px;line-height:24.6px;color:#222;text-indent:21.6px">ON / OFF Master<br>Unsubscribe</div>
<div class="abs" style="left:618px;top:111.2px;width:806px;height:982.5px;border:3.6px solid #c21d2a;border-right-width:4.6px;border-color:#c2182a #b82b3a #c21d2a #c4222e;border-radius:7px"></div>
</div>
</body>
</html>
